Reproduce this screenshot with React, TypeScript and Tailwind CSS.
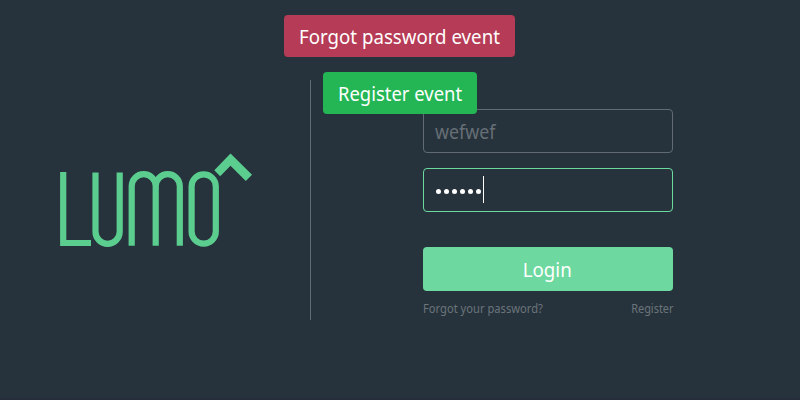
function Logo() {
  return (
    <svg width="196" height="98" viewBox="58 151 196 98" fill="none" stroke="#5bce8f" strokeWidth="6.2" role="img" aria-label="Lumo">
      <path d="M63.2 172V243H91" />
      <path d="M95.5 172.5V231.7A12.1 12.1 0 0 0 119.7 231.7V172.5" />
      <path d="M131.7 245.7V186.2A12 12 0 0 1 155.7 186.2V245.7M155.7 186.2A12.05 12 0 0 1 179.8 186.2V245.7" />
      <path d="M153 179.5L155.7 182.5L158.4 179.5V190H153Z" fill="#5bce8f" stroke="none" />
      <rect x="191.6" y="174.3" width="24.2" height="69.4" rx="12.1" />
      <path d="M214.3 170.3L230.5 153.5L252 174.8L245.8 181L230.5 165.8L220.2 176.2Z" fill="#5bce8f" stroke="none" />
    </svg>
  );
}

function Toast({ text, className, textClassName }: { text: string; className: string; textClassName: string }) {
  return (
    <div className={`absolute flex h-[42px] items-center rounded pt-px pl-[15px] text-[20px] whitespace-nowrap text-white ${className}`}>
      <span className={`origin-left ${textClassName}`}>{text}</span>
    </div>
  );
}

export default function App() {
  return (
    <main className="relative flex h-[400px] w-[800px] overflow-hidden border-b-2 border-[#252c3a] bg-[#26333c] font-['Noto_Sans','Open_Sans',sans-serif]">
      <section className="w-[310px] pt-[151px] pl-[58px]">
        <Logo />
      </section>
      <div className="mt-20 h-60 w-px bg-[#626b73]" />
      <section className="ml-28 w-[250px] pt-[109px]">
        <div className="flex h-11 items-center rounded border border-[#626b73] px-[11px] pt-px text-[20px] text-[#666e76]">
          <span className="origin-left scale-x-[0.89]">wefwef</span>
        </div>
        <div className="mt-[15px] flex h-11 items-center rounded border border-[#6dd9a0] px-3">
          <div className="mt-[3px] flex gap-[2.6px]">
            {[0, 1, 2, 3, 4, 5].map((dot) => (
              <span key={dot} className="size-[5.4px] rounded-full bg-white" />
            ))}
          </div>
          <span className="-mt-px ml-[1.6px] h-[27px] w-px bg-white" />
        </div>
        <button className="mt-[35px] flex h-11 w-full items-center justify-center rounded bg-[#6dd9a0] pt-px pr-[2px] text-[20px] text-white">
          <span className="scale-x-[0.935]">Login</span>
        </button>
        <div className="mt-[9px] flex justify-between text-[12px] leading-[18px] whitespace-nowrap text-[#6b737b]">
          <span className="origin-left scale-x-[0.93]">Forgot your password?</span>
          <span className="-mr-px origin-right scale-x-[0.91]">Register</span>
        </div>
      </section>
      <Toast text="Forgot password event" className="top-[15px] left-[284px] w-[231px] bg-[#b63b56]" textClassName="scale-x-[0.934]" />
      <Toast text="Register event" className="top-[72px] left-[323px] w-[154px] bg-[#24b655]" textClassName="scale-x-[0.922]" />
    </main>
  );
}
